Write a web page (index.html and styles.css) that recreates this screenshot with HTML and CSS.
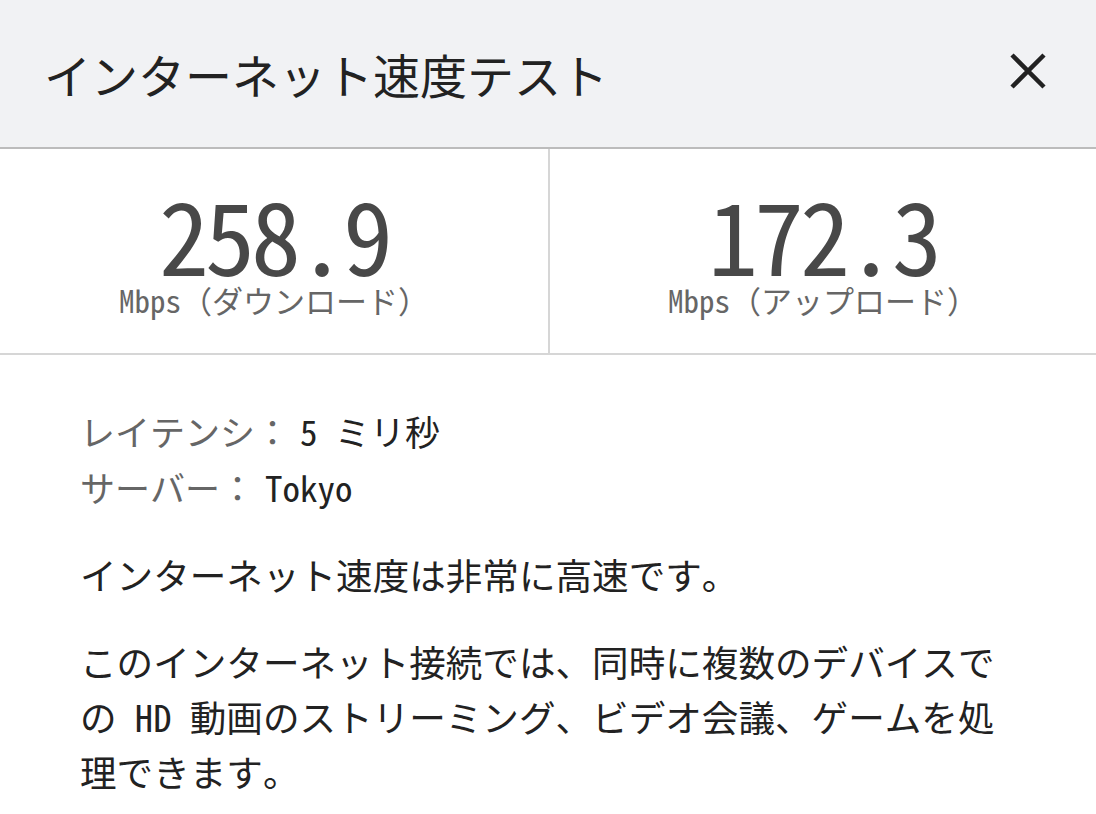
FILE: index.html
```html
<!DOCTYPE html>
<html lang="ja">

<head>
    <meta charset="utf-8">
    <title>インターネット速度テスト</title>
    <link rel="stylesheet" href="styles.css">
</head>

<body>
    <div id="header">
        <h1 id="title">インターネット速度テスト</h1>
        <button id="close-control" type="button" aria-label="閉じる">
            <svg width="36" height="36" viewBox="0 0 36 36">
                <path d="M2 2 L34 34 M34 2 L2 34" />
            </svg>
        </button>
    </div>

    <div id="results">
        <div class="result">
            <span class="result-value">258.9</span>
            <span class="result-label">Mbps（ダウンロード）</span>
        </div>
        <div class="result">
            <span class="result-value">172.3</span>
            <span class="result-label">Mbps（アップロード）</span>
        </div>
    </div>

    <div id="details">
        <div class="detail-row">
            <span class="detail-label">レイテンシ：</span><span class="detail-value">5 ミリ秒</span>
        </div>
        <div class="detail-row">
            <span class="detail-label">サーバー：</span><span class="detail-value">Tokyo</span>
        </div>
        <p class="summary">インターネット速度は非常に高速です。</p>
        <p class="summary">このインターネット接続では、同時に複数のデバイスでの HD 動画のストリーミング、ビデオ会議、ゲームを処理できます。</p>
    </div>
</body>

</html>
```

FILE: styles.css
```css
body {
    margin: 0;
    font-family: "Noto Sans Mono CJK JP", "Noto Sans CJK JP", sans-serif;
    color: #222;
    background-color: white;
    text-spacing-trim: space-all;
}

#header {
    display: flex;
    align-items: center;
    justify-content: space-between;
    height: 147px;
    padding: 0 50px 0 44px;
    background-color: #f1f2f4;
    border-bottom: 2px solid #bcbcbc;
}

#title {
    margin: 0;
    font-size: 47px;
    font-weight: normal;
    line-height: 1;
}

#close-control {
    padding: 0;
    border: 0;
    background: none;
    width: 36px;
    height: 36px;
    margin-top: -6px;
    cursor: pointer;
}

#close-control svg {
    display: block;
    stroke: #222;
    stroke-width: 4.5;
    fill: none;
}

#results {
    display: grid;
    grid-template-columns: 1fr 1fr;
    border-bottom: 2px solid #d6d6d6;
}

.result {
    display: flex;
    flex-direction: column;
    align-items: center;
    padding: 34px 0 38px;
}

.result + .result {
    border-left: 2px solid #d6d6d6;
}

.result-value {
    font-size: 100px;
    line-height: 1;
    letter-spacing: -4px;
    color: #484848;
}

.result-label {
    margin-top: 1px;
    font-size: 31px;
    line-height: 1;
    color: #666;
}

#details {
    width: 922px;
    padding: 48px 80px 0;
}

.detail-row {
    font-size: 35px;
    line-height: 56px;
}

.detail-label {
    color: #666;
}

.detail-value {
    margin-left: 10px;
}

.summary {
    margin: 32px 0 0;
    font-size: 36.6px;
    line-height: 55px;
}
```
